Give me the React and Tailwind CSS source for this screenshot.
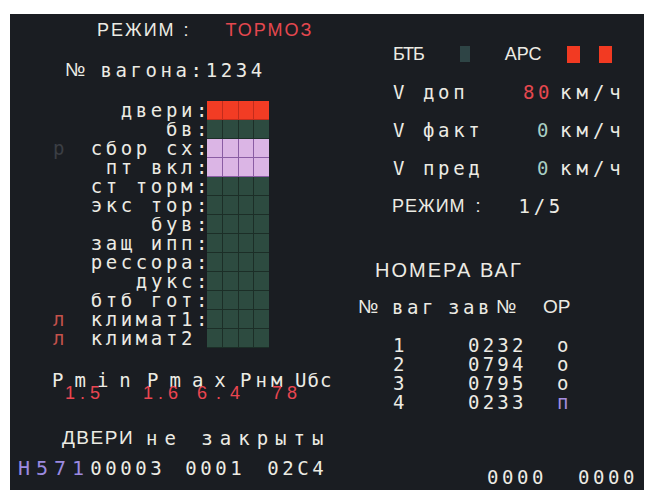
import React from 'react';

const MONO = "font-['DejaVu_Sans_Mono',monospace] tracking-[3.6px]";
const SANS = "font-['Liberation_Sans',Arial,sans-serif]";

const fills = {
  red: { line: 'bg-[#c22c1c]', cell: 'bg-[#f23c24]' },
  green: { line: 'bg-[#1c2e27]', cell: 'bg-[#2d4b40]' },
  lilac: { line: 'bg-[#8a5ca4]', cell: 'bg-[#dbb5e5]' },
};

const statusRows = [
  { label: 'двери', fill: 'red' },
  { label: 'бв', fill: 'green' },
  { label: 'сбор сх', fill: 'lilac', mark: 'р', markColor: 'text-[#3b3e44]' },
  { label: 'пт вкл', fill: 'lilac' },
  { label: 'ст торм', fill: 'green' },
  { label: 'экс тор', fill: 'green' },
  { label: 'був', fill: 'green' },
  { label: 'защ ипп', fill: 'green' },
  { label: 'рессора', fill: 'green' },
  { label: 'дукс', fill: 'green' },
  { label: 'бтб гот', fill: 'green' },
  { label: 'климат1', fill: 'green', mark: 'л', markColor: 'text-[#c4524c]' },
  { label: 'климат2', fill: 'green', mark: 'л', markColor: 'text-[#c4524c]', noColon: true },
];

const speeds = [
  { label: 'V доп', value: '80', color: 'text-[#e5484f]' },
  { label: 'V факт', value: '0', color: 'text-[#a8cfc4]' },
  { label: 'V пред', value: '0', color: 'text-[#a8cfc4]' },
];

const wagons = [
  { n: '1', id: '0232', op: 'о', color: 'text-[#ecebe4]' },
  { n: '2', id: '0794', op: 'о', color: 'text-[#ecebe4]' },
  { n: '3', id: '0795', op: 'о', color: 'text-[#ecebe4]' },
  { n: '4', id: '0233', op: 'п', color: 'text-[#a58de0]' },
];

function StatusRow({ row }) {
  const f = fills[row.fill];
  return (
    <div className="flex h-[19px] items-center whitespace-nowrap text-[19px] leading-[19px]">
      <span className={`box-content w-[20px] pl-[43px] ${MONO} ${row.markColor || ''}`}>{row.mark}</span>
      <span className={`w-[123px] text-right ${MONO}`}>{row.label}</span>
      <span className={`w-[5px] text-center ${MONO} tracking-normal`}>{row.noColon ? '' : ':'}</span>
      <div className={`ml-[6px] grid h-[19px] w-[62px] grid-cols-4 gap-px border-b border-transparent ${f.line}`}>
        <div className={f.cell} />
        <div className={f.cell} />
        <div className={f.cell} />
        <div className={f.cell} />
      </div>
    </div>
  );
}

function LeftPanel() {
  return (
    <div className="flex w-[330px] flex-col whitespace-nowrap text-[#ecebe4]">
      <div className={`flex h-[32px] items-center pl-[87px] text-[18px] ${SANS}`}>
        <span className="tracking-[2px]">РЕЖИМ</span>
        <span className="ml-[8px]">:</span>
        <span className="ml-[37px] tracking-[2px] text-[#e5484f]">ТОРМОЗ</span>
      </div>
      <div className="flex h-[48px] items-center pl-[55px] text-[19px]">
        <span className={SANS}>№</span>
        <span className={`ml-[15px] ${MONO}`}>вагона:1234</span>
      </div>
      <div className="mt-[7px] flex flex-col">
        {statusRows.map((r) => (
          <StatusRow key={r.label} row={r} />
        ))}
      </div>
      <div className={`mt-[26px] flex h-[13px] items-center pl-[42px] text-[19px] leading-[13px] ${MONO}`}>
        <span className="w-[95px] tracking-[11px]">Pmin</span>
        <span className="w-[93px] tracking-[11px]">Pmax</span>
        <span className="w-[55px] tracking-[4px]">Pнм</span>
        <span className="tracking-[1px]">Uбс</span>
      </div>
      <div className={`flex h-[13px] items-center pl-[55px] text-[18px] leading-[13px] text-[#ea4651] ${SANS}`}>
        <span className="w-[78px] tracking-[5px]">1.5</span>
        <span className="w-[54px] tracking-[5px]">1.6</span>
        <span className="w-[75px] tracking-[9px]">6.4</span>
        <span className="tracking-[5px]">78</span>
      </div>
      <div className="mt-[26px] flex h-[24px] items-center pl-[52px] text-[19px]">
        <span className={`${SANS} tracking-[1.5px]`}>ДВЕРИ</span>
        <span className={`ml-[12px] ${MONO} tracking-[7px]`}>не закрыты</span>
      </div>
      <div className={`mt-[6px] flex h-[24px] items-center pl-[8px] text-[19px] ${MONO}`}>
        <span className="text-[20px] tracking-[6px] text-[#9c8ae0]">H571</span>
        <span className="w-[95px]">00003</span>
        <span className="w-[82px]">0001</span>
        <span>02C4</span>
      </div>
    </div>
  );
}

function RightPanel() {
  return (
    <div className="flex flex-1 flex-col whitespace-nowrap text-[19px] text-[#ecebe4]">
      <div className="mt-[21px] flex h-[38px] items-center pl-[53px] text-[18px]">
        <span className={`${SANS} tracking-[-1px]`}>БТБ</span>
        <span className="ml-[36px] h-[16px] w-[10px] bg-[#2e4445]" />
        <span className={`ml-[35px] ${SANS}`}>АРС</span>
        <span className="ml-[25px] h-[17px] w-[13px] bg-[#f23a22]" />
        <span className="ml-[19px] h-[17px] w-[13px] bg-[#f23a22]" />
      </div>
      {speeds.map((s) => (
        <div key={s.label} className={`flex h-[38px] items-center pl-[53px] ${MONO}`}>
          <span className="w-[130px]">{s.label}</span>
          <span className={`w-[29px] text-right ${s.color}`}>{s.value}</span>
          <span className="ml-[8px] tracking-[5px]">км/ч</span>
        </div>
      ))}
      <div className="flex h-[38px] items-center pl-[52px] text-[18px]">
        <span className={`${SANS} tracking-[1px]`}>РЕЖИМ</span>
        <span className={`ml-[10px] ${SANS}`}>:</span>
        <span className={`ml-[38px] text-[19px] ${MONO}`}>1/5</span>
      </div>
      <div className={`mt-[30px] flex h-[30px] items-center pl-[35px] text-[20px] tracking-[2px] ${SANS}`}>
        НОМЕРА ВАГ
      </div>
      <div className="mt-[7px] flex h-[30px] items-center pl-[18px]">
        <span className={`w-[34px] ${SANS}`}>№</span>
        <span className={`w-[56px] ${MONO} tracking-[2px]`}>ваг</span>
        <span className={`w-[48px] ${MONO} tracking-[0.5px]`}>зав</span>
        <span className={`w-[47px] ${SANS}`}>№</span>
        <span className={SANS}>ОР</span>
      </div>
      <div className="mt-[14px] flex flex-col">
        {wagons.map((w) => (
          <div key={w.n} className={`flex h-[19px] items-center pl-[53px] leading-[19px] ${MONO}`}>
            <span className="w-[75px]">{w.n}</span>
            <span className="w-[89px] tracking-[3.2px]">{w.id}</span>
            <span className={w.color}>{w.op}</span>
          </div>
        ))}
      </div>
      <div className={`mt-auto mb-[1px] flex h-[24px] items-center pl-[147px] ${MONO}`}>
        <span className="w-[91px]">0000</span>
        <span>0000</span>
      </div>
    </div>
  );
}

export default function App() {
  return (
    <div className="h-[490px] w-[645px] bg-white pt-[14px] pl-[10px] pr-[1px]">
      <div className="flex h-full bg-[#1a1d22]">
        <LeftPanel />
        <RightPanel />
      </div>
    </div>
  );
}
